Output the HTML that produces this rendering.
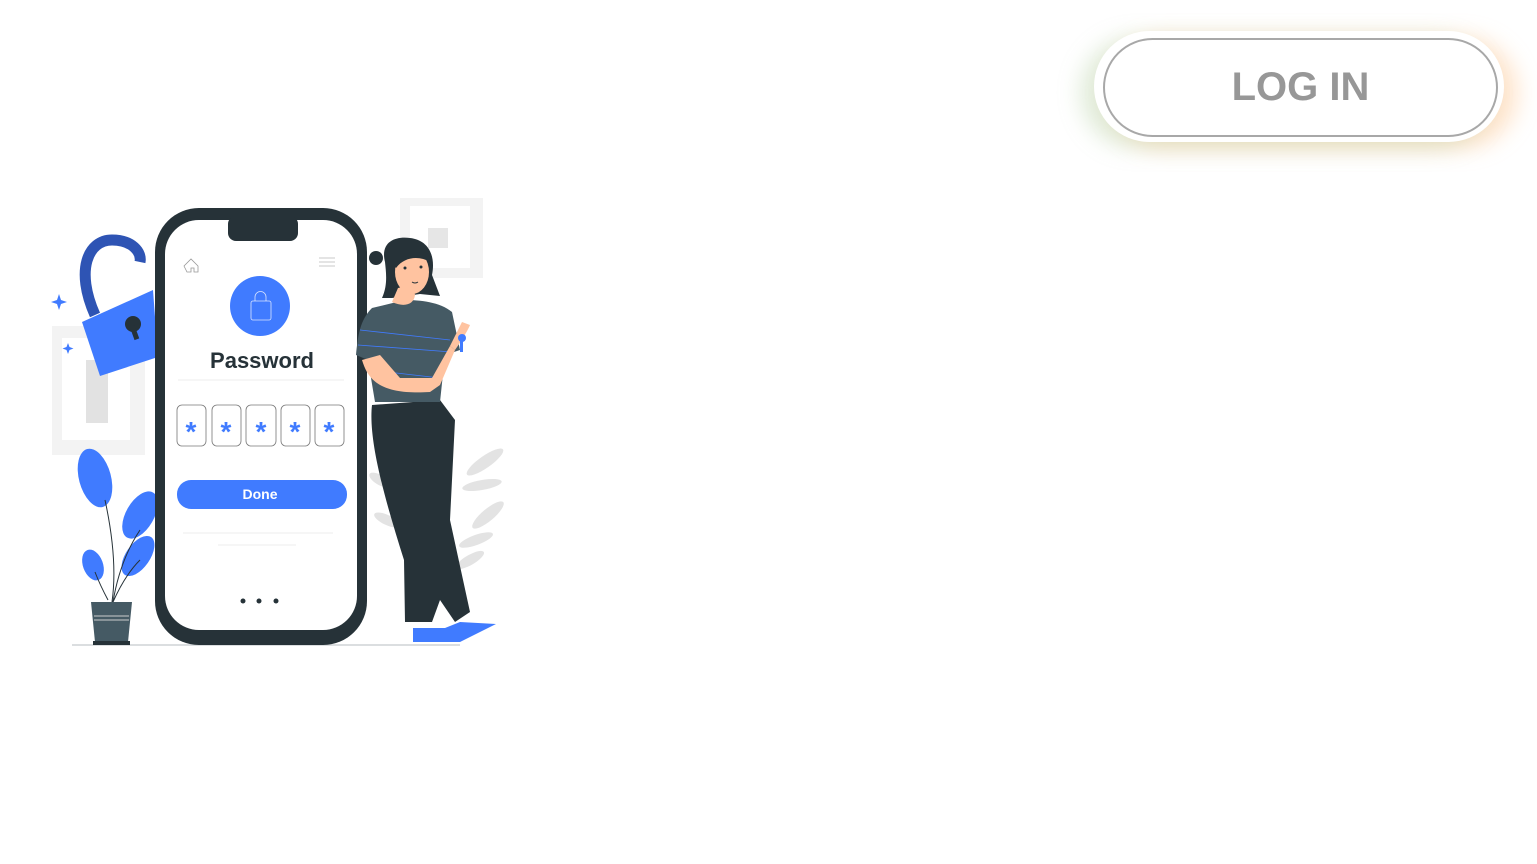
<!DOCTYPE html>
<html><head><meta charset="utf-8"><style>
html,body{margin:0;padding:0;background:#fff;width:1537px;height:864px;overflow:hidden;font-family:"Liberation Sans",sans-serif}
.outer{position:absolute;left:1094px;top:31px;width:410px;height:111px;border-radius:56px;background:#fff;box-shadow:-14px 6px 22px rgba(170,200,150,.35),14px 6px 22px rgba(255,190,130,.4)}
.inner{position:absolute;left:1103px;top:38px;width:391px;height:95px;border:2px solid #a8a8a8;border-radius:50px;display:flex;align-items:center;justify-content:center;color:#979797;font-weight:bold;font-size:40px}
svg{position:absolute;left:0;top:0}
</style></head><body>
<div class="outer"></div>
<div class="inner">LOG IN</div>
<svg width="1537" height="864" viewBox="0 0 1537 864">
<rect x="52" y="326" width="93" height="129" fill="#f3f3f3"/>
<rect x="62" y="338" width="68" height="102" fill="#fff"/>
<rect x="86" y="360" width="22" height="63" fill="#e2e2e2"/>
<rect x="400" y="198" width="83" height="80" fill="#f3f3f3"/>
<rect x="410" y="206" width="60" height="62" fill="#fff"/>
<rect x="428" y="228" width="20" height="20" fill="#e6e6e6"/>
<line x1="72" y1="645" x2="460" y2="645" stroke="#cfd3d6" stroke-width="1.5"/>
<path d="M95 315 C75 270 88 240 112 240 C132 240 142 252 140 262" fill="none" stroke="#2e54b4" stroke-width="11"/>
<polygon points="82,322 153,290 158,357 100,376" fill="#407bff"/>
<circle cx="133" cy="324" r="8" fill="#263238"/><rect x="131" y="326" width="5" height="14" fill="#263238" transform="rotate(-20 133 330)"/>
<path d="M59 294 l2 6 6 2 -6 2 -2 6 -2 -6 -6 -2 6 -2z" fill="#407bff"/>
<path d="M68 343 l1.5 4 4 1.5 -4 1.5 -1.5 4 -1.5 -4 -4 -1.5 4 -1.5z" fill="#407bff"/>
<g fill="#407bff">
<ellipse cx="95" cy="478" rx="16" ry="30" transform="rotate(-15 95 478)"/>
<ellipse cx="140" cy="515" rx="14" ry="26" transform="rotate(30 140 515)"/>
<ellipse cx="138" cy="556" rx="12" ry="23" transform="rotate(35 138 556)"/>
<ellipse cx="93" cy="565" rx="10" ry="16" transform="rotate(-20 93 565)"/>
</g>
<path d="M105 500 Q118 560 112 602 M113 602 Q120 560 140 530 M113 602 Q125 575 140 560 M108 600 Q100 585 95 572" fill="none" stroke="#263238" stroke-width="1"/>
<path d="M91 602 h41 l-4 40 h-33z" fill="#455a64"/>
<rect x="93" y="641" width="37" height="4" fill="#263238"/>
<line x1="94" y1="616" x2="129" y2="616" stroke="#ccc"/><line x1="94" y1="620" x2="129" y2="620" stroke="#ccc"/>
<g fill="#e3e3e3">
<ellipse cx="485" cy="462" rx="22" ry="6" transform="rotate(-35 485 462)"/>
<ellipse cx="482" cy="485" rx="20" ry="5" transform="rotate(-10 482 485)"/>
<ellipse cx="488" cy="515" rx="20" ry="6" transform="rotate(-40 488 515)"/>
<ellipse cx="476" cy="540" rx="18" ry="5" transform="rotate(-20 476 540)"/>
<ellipse cx="470" cy="560" rx="16" ry="5" transform="rotate(-30 470 560)"/>
<ellipse cx="380" cy="480" rx="12" ry="5" transform="rotate(30 380 480)"/>
<ellipse cx="387" cy="520" rx="14" ry="5" transform="rotate(25 387 520)"/>
</g>
<rect x="155" y="208" width="212" height="437" rx="44" fill="#263238"/>
<rect x="165" y="220" width="192" height="410" rx="34" fill="#fff"/>
<rect x="228" y="216" width="70" height="25" rx="8" fill="#263238"/>
<path d="M184 266 l7 -7 7 7 v6 h-4 v-4 h-3 v4 h-4z" fill="none" stroke="#999" stroke-width="0.8"/>
<g stroke="#bbb" stroke-width="0.8"><line x1="319" y1="258" x2="335" y2="258"/><line x1="319" y1="262" x2="335" y2="262"/><line x1="319" y1="266" x2="335" y2="266"/></g>
<circle cx="260" cy="306" r="30" fill="#407bff"/>
<rect x="251" y="301" width="20" height="19" rx="2" fill="none" stroke="#fff" stroke-width="0.8" opacity=".8"/>
<path d="M255 301 v-4 a5.5 5.5 0 0 1 11 0 v4" fill="none" stroke="#fff" stroke-width="0.8" opacity=".8"/>
<text x="262" y="368" text-anchor="middle" font-family="Liberation Sans,sans-serif" font-weight="bold" font-size="22" fill="#263238">Password</text>
<line x1="178" y1="380" x2="344" y2="380" stroke="#eee"/>
<g fill="#fff" stroke="#777" stroke-width="0.8">
<rect x="177" y="405" width="29" height="41" rx="5"/><rect x="212" y="405" width="29" height="41" rx="5"/><rect x="246" y="405" width="30" height="41" rx="5"/><rect x="281" y="405" width="29" height="41" rx="5"/><rect x="315" y="405" width="29" height="41" rx="5"/>
</g>
<g font-family="Liberation Sans,sans-serif" font-weight="bold" font-size="28" fill="#407bff" text-anchor="middle">
<text x="191" y="441">*</text><text x="226" y="441">*</text><text x="261" y="441">*</text><text x="295" y="441">*</text><text x="329" y="441">*</text></g>
<rect x="177" y="480" width="170" height="29" rx="14" fill="#407bff"/>
<text x="260" y="499" text-anchor="middle" font-family="Liberation Sans,sans-serif" font-weight="bold" font-size="14" fill="#fff">Done</text>
<line x1="183" y1="533" x2="333" y2="533" stroke="#eee"/>
<line x1="218" y1="545" x2="296" y2="545" stroke="#eee"/>
<g fill="#263238"><circle cx="243" cy="601" r="2.5"/><circle cx="259" cy="601" r="2.5"/><circle cx="276" cy="601" r="2.5"/></g>
<path d="M372 405 C368 440 385 500 404 560 L405 622 L432 622 L440 600 L455 622 L470 612 L450 520 L455 420 L440 400z" fill="#263238"/>
<path d="M413 628 h32 l15 -6 L496 624 L460 642 H413z" fill="#407bff"/>
<path d="M372 308 C360 320 358 335 356 355 L368 360 L375 402 L440 402 L445 355 L460 350 L452 312 C440 302 420 300 405 300z" fill="#455a64"/>
<g stroke="#407bff" stroke-width="0.8" fill="none"><path d="M360 330 L450 340"/><path d="M358 345 L452 352"/><path d="M370 370 L440 378"/></g>
<path d="M362 360 C368 380 380 395 430 392 L440 385 L455 350 L450 346 L432 378 L400 378 L380 355z" fill="#ffc3a0"/>
<path d="M455 350 C462 340 468 330 470 325 L462 322 L450 346z" fill="#ffc3a0"/>
<!-- hair back -->
<path d="M385 262 C380 242 395 236 410 238 C428 240 436 255 432 275 L440 296 L420 294 L392 298 L382 298 C388 285 386 272 385 262z" fill="#263238"/>
<circle cx="376" cy="258" r="7" fill="#263238"/>
<path d="M392 302 C405 308 414 304 415 295 L413 285 L398 288z" fill="#ffc3a0"/>
<ellipse cx="412" cy="272" rx="17" ry="22" fill="#ffc3a0"/>
<!-- fringe -->
<path d="M392 262 C396 246 410 242 422 248 C428 252 430 258 430 262 C420 256 405 256 396 268z" fill="#263238"/>
<circle cx="405" cy="268" r="1.5" fill="#263238"/><circle cx="421" cy="267" r="1.5" fill="#263238"/>
<path d="M412 282 q3 2 6 0" stroke="#263238" fill="none" stroke-width="1"/>
<circle cx="462" cy="338" r="4" fill="#407bff"/><rect x="460" y="338" width="3" height="14" fill="#407bff"/>
</svg>
</body></html>
